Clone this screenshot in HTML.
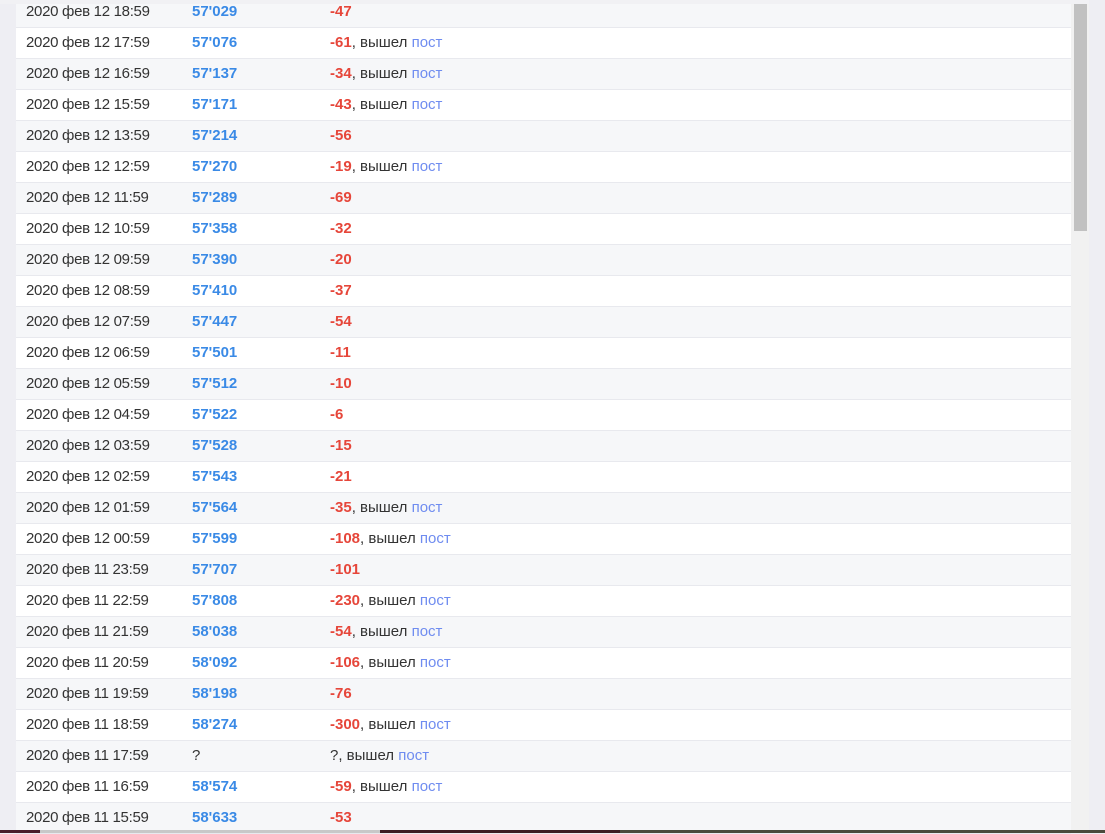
<!DOCTYPE html>
<html><head><meta charset="utf-8"><style>
html,body{margin:0;padding:0;width:1105px;height:833px;overflow:hidden;background:#eeeef3;font-family:"Liberation Sans",Arial,sans-serif;}
#tbl{position:absolute;left:16px;top:1px;width:1055px;height:833px;background:#fff;}
.r{position:absolute;left:0;width:1055px;height:30px;border-bottom:1px solid #e8e9ee;font-size:15px;line-height:30px;color:#333;}
.r.g{background:#f6f7f9;}
.d{position:absolute;left:10px;letter-spacing:-0.3px}
.n{position:absolute;left:176px;font-weight:bold;color:#3a8ae6;}
.x{position:absolute;left:314px;}
.x b{color:#e6463a;}
.x a{color:#6f8cf0;text-decoration:none;}
#top{position:absolute;left:0;top:0;width:1089px;height:4px;background:#f1f1f4;}
#track{position:absolute;left:1071px;top:4px;width:18px;height:829px;background:#f1f1f1;}
#thumb{position:absolute;left:1074px;top:4px;width:13px;height:227px;background:#c1c1c1;}
#bot{position:absolute;left:0;top:830px;width:1105px;height:3px;background:#4a4a3c;}
#bot1{position:absolute;left:0;top:830px;width:40px;height:3px;background:#4a1d2a;}
#bot2{position:absolute;left:40px;top:830px;width:340px;height:3px;background:#c8c8c8;}
#bot3{position:absolute;left:380px;top:830px;width:240px;height:3px;background:#3c1c24;}
</style></head><body>
<div id="tbl">
<div class="r g" style="top:-4px"><span class="d">2020 фев 12 18:59</span><span class="n">57'029</span><span class="x"><b>-47</b></span></div>
<div class="r" style="top:27px"><span class="d">2020 фев 12 17:59</span><span class="n">57'076</span><span class="x"><b>-61</b>, вышел <a>пост</a></span></div>
<div class="r g" style="top:58px"><span class="d">2020 фев 12 16:59</span><span class="n">57'137</span><span class="x"><b>-34</b>, вышел <a>пост</a></span></div>
<div class="r" style="top:89px"><span class="d">2020 фев 12 15:59</span><span class="n">57'171</span><span class="x"><b>-43</b>, вышел <a>пост</a></span></div>
<div class="r g" style="top:120px"><span class="d">2020 фев 12 13:59</span><span class="n">57'214</span><span class="x"><b>-56</b></span></div>
<div class="r" style="top:151px"><span class="d">2020 фев 12 12:59</span><span class="n">57'270</span><span class="x"><b>-19</b>, вышел <a>пост</a></span></div>
<div class="r g" style="top:182px"><span class="d">2020 фев 12 11:59</span><span class="n">57'289</span><span class="x"><b>-69</b></span></div>
<div class="r" style="top:213px"><span class="d">2020 фев 12 10:59</span><span class="n">57'358</span><span class="x"><b>-32</b></span></div>
<div class="r g" style="top:244px"><span class="d">2020 фев 12 09:59</span><span class="n">57'390</span><span class="x"><b>-20</b></span></div>
<div class="r" style="top:275px"><span class="d">2020 фев 12 08:59</span><span class="n">57'410</span><span class="x"><b>-37</b></span></div>
<div class="r g" style="top:306px"><span class="d">2020 фев 12 07:59</span><span class="n">57'447</span><span class="x"><b>-54</b></span></div>
<div class="r" style="top:337px"><span class="d">2020 фев 12 06:59</span><span class="n">57'501</span><span class="x"><b>-11</b></span></div>
<div class="r g" style="top:368px"><span class="d">2020 фев 12 05:59</span><span class="n">57'512</span><span class="x"><b>-10</b></span></div>
<div class="r" style="top:399px"><span class="d">2020 фев 12 04:59</span><span class="n">57'522</span><span class="x"><b>-6</b></span></div>
<div class="r g" style="top:430px"><span class="d">2020 фев 12 03:59</span><span class="n">57'528</span><span class="x"><b>-15</b></span></div>
<div class="r" style="top:461px"><span class="d">2020 фев 12 02:59</span><span class="n">57'543</span><span class="x"><b>-21</b></span></div>
<div class="r g" style="top:492px"><span class="d">2020 фев 12 01:59</span><span class="n">57'564</span><span class="x"><b>-35</b>, вышел <a>пост</a></span></div>
<div class="r" style="top:523px"><span class="d">2020 фев 12 00:59</span><span class="n">57'599</span><span class="x"><b>-108</b>, вышел <a>пост</a></span></div>
<div class="r g" style="top:554px"><span class="d">2020 фев 11 23:59</span><span class="n">57'707</span><span class="x"><b>-101</b></span></div>
<div class="r" style="top:585px"><span class="d">2020 фев 11 22:59</span><span class="n">57'808</span><span class="x"><b>-230</b>, вышел <a>пост</a></span></div>
<div class="r g" style="top:616px"><span class="d">2020 фев 11 21:59</span><span class="n">58'038</span><span class="x"><b>-54</b>, вышел <a>пост</a></span></div>
<div class="r" style="top:647px"><span class="d">2020 фев 11 20:59</span><span class="n">58'092</span><span class="x"><b>-106</b>, вышел <a>пост</a></span></div>
<div class="r g" style="top:678px"><span class="d">2020 фев 11 19:59</span><span class="n">58'198</span><span class="x"><b>-76</b></span></div>
<div class="r" style="top:709px"><span class="d">2020 фев 11 18:59</span><span class="n">58'274</span><span class="x"><b>-300</b>, вышел <a>пост</a></span></div>
<div class="r g" style="top:740px"><span class="d">2020 фев 11 17:59</span><span class="n" style="font-weight:normal;color:#333">?</span><span class="x">?, вышел <a>пост</a></span></div>
<div class="r" style="top:771px"><span class="d">2020 фев 11 16:59</span><span class="n">58'574</span><span class="x"><b>-59</b>, вышел <a>пост</a></span></div>
<div class="r g" style="top:802px"><span class="d">2020 фев 11 15:59</span><span class="n">58'633</span><span class="x"><b>-53</b></span></div>
</div>
<div id="top"></div>
<div id="track"></div>
<div id="thumb"></div>
<div id="bot"></div><div id="bot1"></div><div id="bot2"></div><div id="bot3"></div>
</body></html>
